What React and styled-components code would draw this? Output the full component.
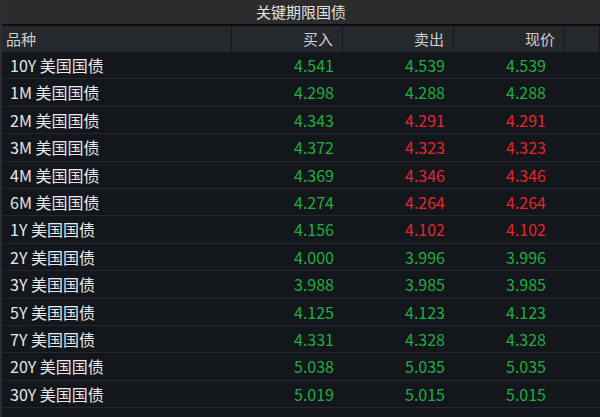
import React from 'react';
import styled, { createGlobalStyle } from 'styled-components';

const Global = createGlobalStyle`
  body { margin: 0; background: #111418; }
`;

const Panel = styled.div`
  width: 600px;
  height: 417px;
  background: #13161b;
  font-family: "Noto Sans CJK SC", "Noto Sans", sans-serif;
  overflow: hidden;
  border-left: 2px solid #2b2e33;
  box-sizing: border-box;
`;

const Title = styled.div`
  height: 24px;
  line-height: 24px;
  background: #2c2c2c;
  color: #e2e2e2;
  text-align: center;
  font-size: 15px;
  border-bottom: 2px solid #0c0d0f;
`;

const Grid = styled.div`
  display: grid;
  grid-template-columns: 230px 111px 111px 111px 1fr;
`;

const HeadCell = styled.div`
  height: 26px;
  line-height: 26px;
  background: #25282d;
  color: #cfcfcf;
  font-size: 15px;
  text-align: ${p => (p.left ? 'left' : 'right')};
  padding-left: ${p => (p.left ? '4px' : '0')};
  padding-right: ${p => (p.left ? '0' : '9px')};
  border-right: 1px solid #15171a;
`;

const Cell = styled.div`
  height: 27.4px;
  line-height: 27px;
  font-size: 16px;
  box-sizing: border-box;
  border-bottom: 1px solid #23272c;
  text-align: ${p => (p.left ? 'left' : 'right')};
  padding-left: ${p => (p.left ? '8px' : '0')};
  padding-right: ${p => (p.left ? '0' : p.pr || '12px')};
  color: ${p => p.color || '#e8e8e8'};
`;

const G = '#1fae3f';
const R = '#e3262b';

const rows = [
  ['10Y', '4.541', '4.539', '4.539', G],
  ['1M', '4.298', '4.288', '4.288', G],
  ['2M', '4.343', '4.291', '4.291', R],
  ['3M', '4.372', '4.323', '4.323', R],
  ['4M', '4.369', '4.346', '4.346', R],
  ['6M', '4.274', '4.264', '4.264', R],
  ['1Y', '4.156', '4.102', '4.102', R],
  ['2Y', '4.000', '3.996', '3.996', G],
  ['3Y', '3.988', '3.985', '3.985', G],
  ['5Y', '4.125', '4.123', '4.123', G],
  ['7Y', '4.331', '4.328', '4.328', G],
  ['20Y', '5.038', '5.035', '5.035', G],
  ['30Y', '5.019', '5.015', '5.015', G],
];

export default function App() {
  return (
    <>
      <Global />
      <Panel>
        <Title>关键期限国债</Title>
        <Grid>
          <HeadCell left>品种</HeadCell>
          <HeadCell>买入</HeadCell>
          <HeadCell>卖出</HeadCell>
          <HeadCell>现价</HeadCell>
          <HeadCell />
          {rows.map(([t, b, s, p, c]) => (
            <React.Fragment key={t}>
              <Cell left>{t} 美国国债</Cell>
              <Cell color={G} pr="9px">{b}</Cell>
              <Cell color={c} pr="9px">{s}</Cell>
              <Cell color={c} pr="19px">{p}</Cell>
              <Cell />
            </React.Fragment>
          ))}
        </Grid>
      </Panel>
    </>
  );
}
